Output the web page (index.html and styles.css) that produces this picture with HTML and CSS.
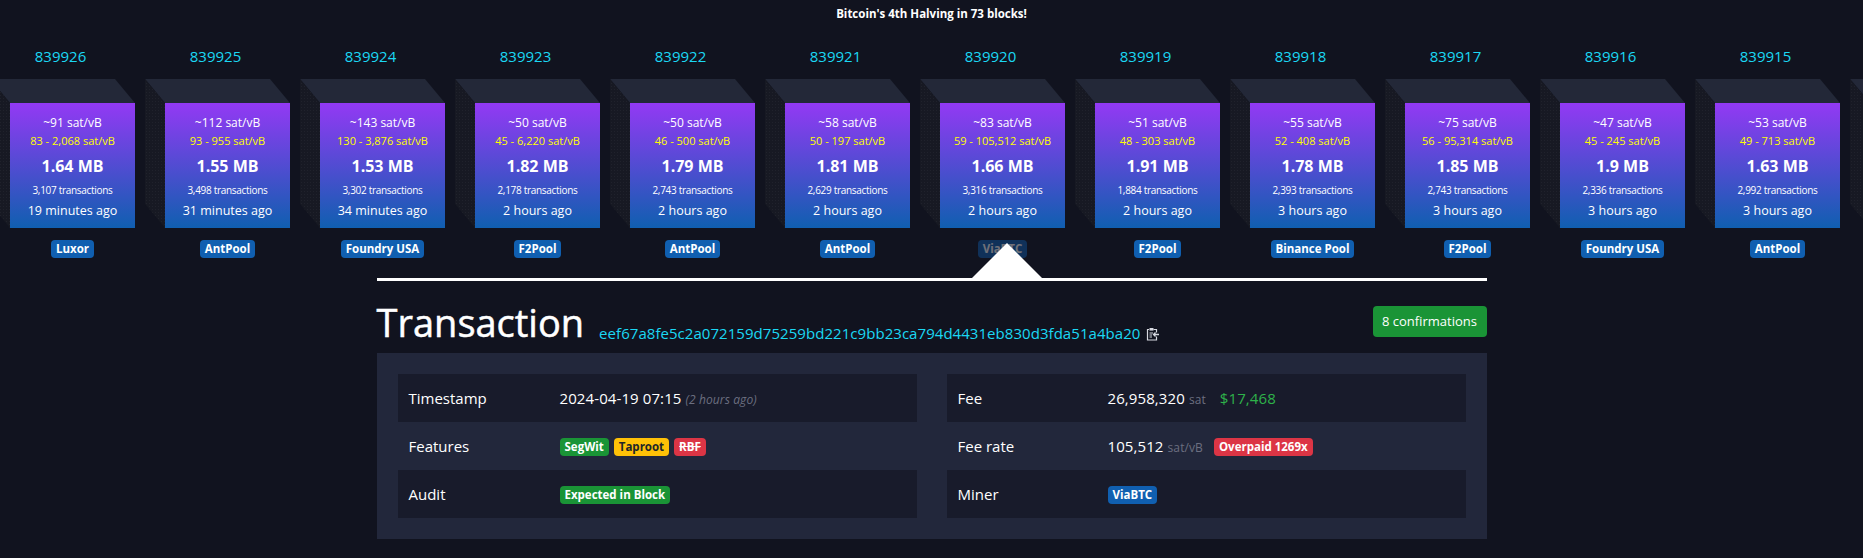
FILE: index.html
```html
<!DOCTYPE html>
<html lang="en">
<head>
    <meta charset="UTF-8">
    <title>Transaction</title>
    <link rel="stylesheet" href="styles.css">
</head>
<body>

    <div class="banner">Bitcoin's 4th Halving in 73 blocks!</div>

    <div class="chain">
        <div class="block">
            <a class="height">839926</a>
            <div class="face">
                <div class="median">~91 sat/vB</div>
                <div class="range">83 - 2,068 sat/vB</div>
                <div class="size">1.64 MB</div>
                <div class="count">3,107 transactions</div>
                <div class="age">19 minutes ago</div>
            </div>
            <span class="pool">Luxor</span>
        </div>
        <div class="block">
            <a class="height">839925</a>
            <div class="face">
                <div class="median">~112 sat/vB</div>
                <div class="range">93 - 955 sat/vB</div>
                <div class="size">1.55 MB</div>
                <div class="count">3,498 transactions</div>
                <div class="age">31 minutes ago</div>
            </div>
            <span class="pool">AntPool</span>
        </div>
        <div class="block">
            <a class="height">839924</a>
            <div class="face">
                <div class="median">~143 sat/vB</div>
                <div class="range">130 - 3,876 sat/vB</div>
                <div class="size">1.53 MB</div>
                <div class="count">3,302 transactions</div>
                <div class="age">34 minutes ago</div>
            </div>
            <span class="pool">Foundry USA</span>
        </div>
        <div class="block">
            <a class="height">839923</a>
            <div class="face">
                <div class="median">~50 sat/vB</div>
                <div class="range">45 - 6,220 sat/vB</div>
                <div class="size">1.82 MB</div>
                <div class="count">2,178 transactions</div>
                <div class="age">2 hours ago</div>
            </div>
            <span class="pool">F2Pool</span>
        </div>
        <div class="block">
            <a class="height">839922</a>
            <div class="face">
                <div class="median">~50 sat/vB</div>
                <div class="range">46 - 500 sat/vB</div>
                <div class="size">1.79 MB</div>
                <div class="count">2,743 transactions</div>
                <div class="age">2 hours ago</div>
            </div>
            <span class="pool">AntPool</span>
        </div>
        <div class="block">
            <a class="height">839921</a>
            <div class="face">
                <div class="median">~58 sat/vB</div>
                <div class="range">50 - 197 sat/vB</div>
                <div class="size">1.81 MB</div>
                <div class="count">2,629 transactions</div>
                <div class="age">2 hours ago</div>
            </div>
            <span class="pool">AntPool</span>
        </div>
        <div class="block">
            <a class="height">839920</a>
            <div class="face">
                <div class="median">~83 sat/vB</div>
                <div class="range">59 - 105,512 sat/vB</div>
                <div class="size">1.66 MB</div>
                <div class="count">3,316 transactions</div>
                <div class="age">2 hours ago</div>
            </div>
            <span class="pool dim">ViaBTC</span>
        </div>
        <div class="block">
            <a class="height">839919</a>
            <div class="face">
                <div class="median">~51 sat/vB</div>
                <div class="range">48 - 303 sat/vB</div>
                <div class="size">1.91 MB</div>
                <div class="count">1,884 transactions</div>
                <div class="age">2 hours ago</div>
            </div>
            <span class="pool">F2Pool</span>
        </div>
        <div class="block">
            <a class="height">839918</a>
            <div class="face">
                <div class="median">~55 sat/vB</div>
                <div class="range">52 - 408 sat/vB</div>
                <div class="size">1.78 MB</div>
                <div class="count">2,393 transactions</div>
                <div class="age">3 hours ago</div>
            </div>
            <span class="pool">Binance Pool</span>
        </div>
        <div class="block">
            <a class="height">839917</a>
            <div class="face">
                <div class="median">~75 sat/vB</div>
                <div class="range">56 - 95,314 sat/vB</div>
                <div class="size">1.85 MB</div>
                <div class="count">2,743 transactions</div>
                <div class="age">3 hours ago</div>
            </div>
            <span class="pool">F2Pool</span>
        </div>
        <div class="block">
            <a class="height">839916</a>
            <div class="face">
                <div class="median">~47 sat/vB</div>
                <div class="range">45 - 245 sat/vB</div>
                <div class="size">1.9 MB</div>
                <div class="count">2,336 transactions</div>
                <div class="age">3 hours ago</div>
            </div>
            <span class="pool">Foundry USA</span>
        </div>
        <div class="block">
            <a class="height">839915</a>
            <div class="face">
                <div class="median">~53 sat/vB</div>
                <div class="range">49 - 713 sat/vB</div>
                <div class="size">1.63 MB</div>
                <div class="count">2,992 transactions</div>
                <div class="age">3 hours ago</div>
            </div>
            <span class="pool">AntPool</span>
        </div>
        <div class="block"><div class="face blank"></div></div>
    </div>

    <div class="container">
        <div class="arrow"></div>

        <div class="title-row">
            <h1>Transaction</h1>
            <a class="txid">eef67a8fe5c2a072159d75259bd221c9bb23ca794d4431eb830d3fda51a4ba20</a>
            <svg class="copy" viewBox="0 0 14 14" width="14" height="14">
                <path d="M4 2.5H2.5V13H11.5V9.5M11.5 5.5V2.5H8.5" fill="none" stroke="#d6d8e0" stroke-width="1.2"/>
                <rect x="4.5" y="1" width="4" height="2.6" fill="#d6d8e0"/>
                <path d="M4.5 6H8M4.5 8H7M4.5 10H7" stroke="#d6d8e0" stroke-width="1"/>
                <path d="M14 7.5H8.5M10.5 5.5L8.5 7.5L10.5 9.5" fill="none" stroke="#d6d8e0" stroke-width="1.3"/>
            </svg>
            <span class="confirmations">8 confirmations</span>
        </div>

        <div class="panel">
            <div class="column">
                <div class="row">
                    <div class="label">Timestamp</div>
                    <div class="value">2024-04-19 07:15 <i class="ago">(2 hours ago)</i></div>
                </div>
                <div class="row">
                    <div class="label">Features</div>
                    <div class="value">
                        <span class="badge green">SegWit</span>
                        <span class="badge yellow">Taproot</span>
                        <span class="badge red"><s>RBF</s></span>
                    </div>
                </div>
                <div class="row">
                    <div class="label">Audit</div>
                    <div class="value"><span class="badge green">Expected in Block</span></div>
                </div>
            </div>
            <div class="column">
                <div class="row">
                    <div class="label">Fee</div>
                    <div class="value">26,958,320 <span class="unit">sat</span> <span class="fiat">$17,468</span></div>
                </div>
                <div class="row">
                    <div class="label">Fee rate</div>
                    <div class="value">105,512 <span class="unit">sat/vB</span> <span class="badge red overpaid">Overpaid 1269x</span></div>
                </div>
                <div class="row">
                    <div class="label">Miner</div>
                    <div class="value"><span class="badge blue">ViaBTC</span></div>
                </div>
            </div>
        </div>
    </div>

</body>
</html>
```

FILE: styles.css
```css
body {
    margin: 0;
    height: 558px;
    overflow: hidden;
    background-color: #11131f;
    color: #fff;
    font-family: "Open Sans", "Noto Sans", sans-serif;
    font-size: 15px;
}

.banner {
    height: 24px;
    line-height: 27px;
    text-align: center;
    font-size: 11.5px;
    font-weight: 700;
}

/* block chain strip */
.chain {
    display: flex;
    gap: 30px;
    height: 254px;
    padding: 20px 0 0 10px;
    box-sizing: border-box;
}

.block {
    position: relative;
    flex: none;
    width: 125px;
    display: flex;
    flex-direction: column;
    align-items: center;
}

.height {
    width: 125px;
    margin-left: -24px;
    height: 24px;
    line-height: 24px;
    text-align: center;
    color: #1bd8f4;
    font-size: 15px;
}

.face {
    position: relative;
    width: 125px;
    height: 125px;
    margin-top: 35px;
    padding-top: 11px;
    box-sizing: border-box;
    background: linear-gradient(#9339f4, #105fb0);
    text-align: center;
}

.face.blank {
    margin-top: 59px;
}

/* top and left faces of the cube */
.face::before {
    content: "";
    position: absolute;
    left: -20px;
    top: -24px;
    width: 145px;
    height: 24px;
    background-color: #232838;
    clip-path: polygon(0 0, 125px 0, 100% 100%, 20px 100%);
}

.face::after {
    content: "";
    position: absolute;
    left: -20px;
    top: -24px;
    width: 20px;
    height: 149px;
    background-color: #171923;
    background-image: radial-gradient(rgba(255, 255, 255, 0.04) 1px, transparent 1px);
    background-size: 3px 3px;
    clip-path: polygon(0 0, 100% 24px, 100% 100%, 0 125px);
}

.median {
    font-size: 12px;
    line-height: 18px;
}

.range {
    font-size: 11px;
    line-height: 18px;
    color: #ffff00;
}

.size {
    margin-top: 5px;
    font-size: 16px;
    font-weight: 700;
    line-height: 22px;
}

.count {
    margin-top: 3px;
    font-size: 10px;
    letter-spacing: -0.3px;
    line-height: 20px;
}

.age {
    font-size: 12.5px;
    line-height: 22px;
}

.pool {
    margin-top: 12px;
    height: 18px;
    line-height: 18px;
    padding: 0 5px;
    border-radius: 4px;
    background-color: #105fb0;
    font-size: 11.5px;
    font-weight: 700;
    white-space: nowrap;
}

.pool.dim {
    opacity: 0.4;
}

/* transaction details */
.container {
    position: relative;
    width: 1110px;
    margin: 0 auto;
    border-top: 3px solid #fff;
}

.arrow {
    position: absolute;
    left: 595px;
    bottom: calc(100% + 3px);
    border-left: 35px solid transparent;
    border-right: 35px solid transparent;
    border-bottom: 35px solid #fff;
}

.title-row {
    display: flex;
    align-items: flex-end;
    height: 72px;
    padding-bottom: 7px;
    box-sizing: border-box;
}

h1 {
    margin: 0 0 -2px;
    font-size: 38px;
    font-weight: 400;
    -webkit-text-stroke: 0.5px #fff;
    line-height: 52px;
}

.txid {
    margin: 0 5px 1px 15px;
    color: #1bd8f4;
    font-size: 15px;
    letter-spacing: 0.05px;
    line-height: 24px;
}

.copy {
    margin-bottom: 5px;
}

.confirmations {
    margin-left: auto;
    align-self: flex-start;
    margin-top: 25px;
    width: 114px;
    height: 31px;
    line-height: 31px;
    text-align: center;
    border-radius: 4px;
    background-color: #1a9436;
    font-size: 13px;
}

.panel {
    display: grid;
    grid-template-columns: 1fr 1fr;
    gap: 30px;
    height: 186px;
    padding: 21px;
    box-sizing: border-box;
    background-color: #22273b;
}

.column {
    display: flex;
    flex-direction: column;
}

.row {
    display: flex;
    align-items: center;
    height: 48px;
    padding-left: 11px;
}

.row:nth-child(odd) {
    background-color: #181b2b;
}

.label {
    width: 151px;
    flex: none;
}

.column:last-child .label {
    width: 150px;
}

.value {
    letter-spacing: 0.1px;
}

.ago {
    color: #6c6f80;
    font-size: 12px;
}

.unit {
    color: #6c6f80;
    font-size: 12px;
}

.fiat {
    margin-left: 10px;
    color: #2eb24a;
}

.badge {
    display: inline-block;
    height: 18px;
    line-height: 18px;
    padding: 0 5px;
    border-radius: 4px;
    font-size: 11.5px;
    font-weight: 700;
    letter-spacing: 0;
    vertical-align: middle;
}

.badge + .badge {
    margin-left: 1px;
}

.green {
    background-color: #1a9436;
}

.yellow {
    background-color: #ffc107;
    color: #212529;
}

.red {
    background-color: #dc3545;
}

.blue {
    background-color: #105fb0;
}

.overpaid {
    margin-left: 7px;
}
```
